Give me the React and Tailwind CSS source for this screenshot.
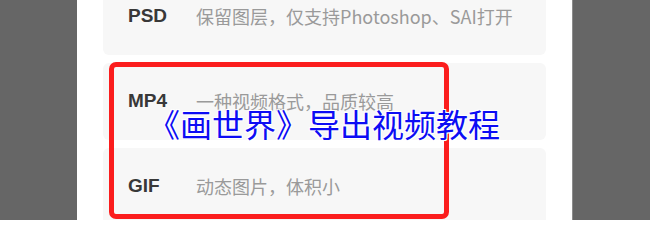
import React from "react";

const rows = [
  { label: "PSD", desc: "保留图层，仅支持Photoshop、SAI打开" },
  { label: "MP4", desc: "一种视频格式，品质较高" },
  { label: "GIF", desc: "动态图片，体积小" },
];

export default function App() {
  return (
    <div className="relative flex h-[220px] w-[650px] overflow-hidden bg-[#666666]">
      <div className="w-[77px] shrink-0" />
      <div className="w-[495px] shrink-0 bg-white px-[26px]">
        <div className="-mt-[22px] flex flex-col gap-[8px]">
          {rows.map((r) => (
            <div
              key={r.label}
              className="flex h-[77px] items-center rounded-[6px] bg-[#f7f7f7] pl-[25px]"
            >
              <span className="w-[68px] shrink-0 font-['Liberation_Sans',sans-serif] text-[19px] font-bold text-[#383838]">
                {r.label}
              </span>
              <span className="font-['Noto_Sans_CJK_SC',sans-serif] text-[18px] text-[#9a9a9a]">
                {r.desc}
              </span>
            </div>
          ))}
        </div>
      </div>
      <div className="flex-1 border-l border-[#8c8c8c]" />

      <div className="absolute left-[109px] top-[62px] h-[157px] w-[340px] rounded-[7px] border-[5px] border-[#fb1d1d]" />

      <div className="absolute left-[148px] top-[103px] whitespace-nowrap font-['Noto_Sans_CJK_SC',sans-serif] text-[32px] leading-[40px] text-[#0c0cf4] [text-shadow:0_0_2px_#fff,1px_1px_0_#fff,-1px_-1px_0_#fff,1px_-1px_0_#fff,-1px_1px_0_#fff]">
        《画世界》导出视频教程
      </div>
    </div>
  );
}
